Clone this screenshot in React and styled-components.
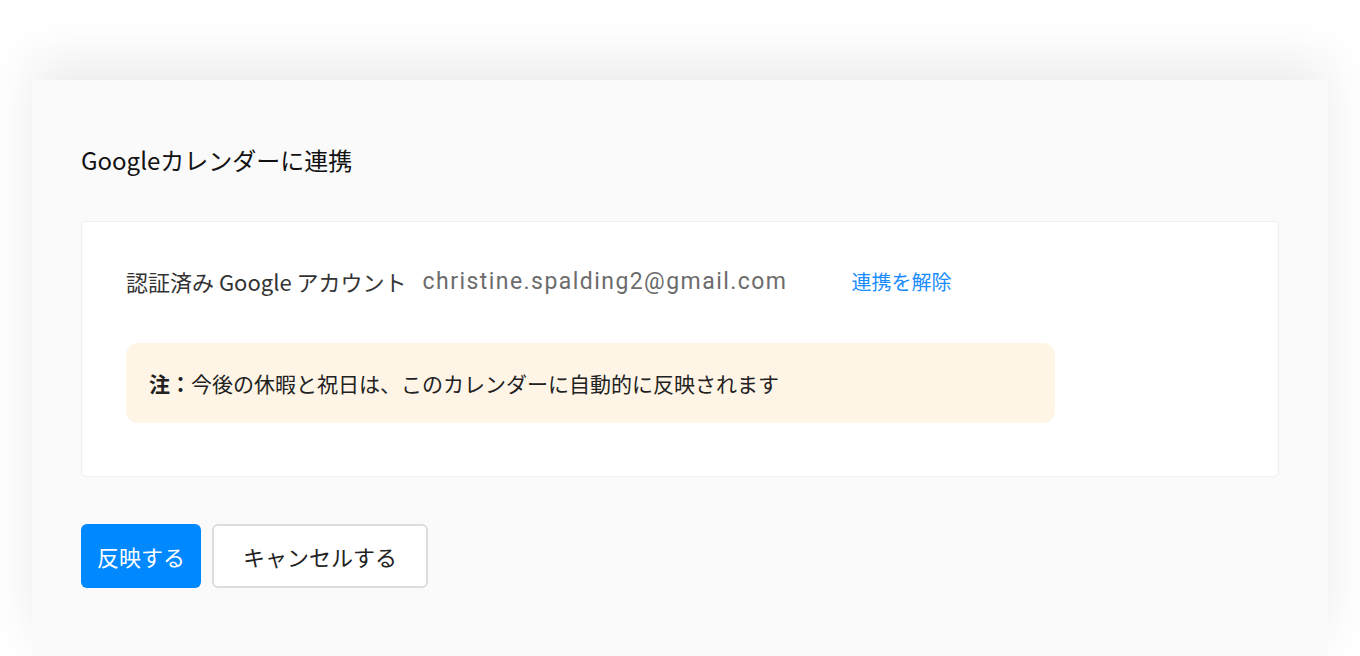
import styled, { createGlobalStyle } from "styled-components";

const GlobalStyle = createGlobalStyle`
  html, body {
    margin: 0;
    padding: 0;
    background: #ffffff;
    font-family: "Noto Sans CJK JP", "Noto Sans", sans-serif;
  }
  #root {
    height: 656px;
    overflow: hidden;
  }
`;

const Page = styled.div`
  padding: 80px 32px 0;
  height: 656px;
  box-sizing: border-box;
`;

const Panel = styled.section`
  background: #fafafa;
  height: 100%;
  box-sizing: border-box;
  padding: 64px 49px 0;
  box-shadow: 0 -20px 50px rgba(0, 0, 0, 0.08);
`;

const Title = styled.h2`
  margin: 0 0 45px;
  font-size: 24px;
  line-height: 32px;
  font-weight: 400;
  color: #111;
`;

const Card = styled.div`
  background: #fff;
  border: 1px solid #f0f0f0;
  border-radius: 5px;
  padding: 44px 44px 53px;
`;

const AccountRow = styled.div`
  display: flex;
  align-items: center;
  height: 30px;
`;

const Label = styled.span`
  font-size: 22px;
  color: #333;
  margin-right: 16px;
`;

const Email = styled.span`
  font-family: Roboto, "Liberation Sans", sans-serif;
  font-size: 23px;
  letter-spacing: 1.45px;
  color: #6c6c6c;
  margin-right: 64px;
`;

const UnlinkLink = styled.a`
  font-size: 20px;
  color: #1a8cff;
  text-decoration: none;
  cursor: pointer;
`;

const Note = styled.div`
  margin-top: 47px;
  width: 929px;
  height: 80px;
  box-sizing: border-box;
  background: #fff5e6;
  border-radius: 12px;
  padding: 0 23px;
  display: flex;
  align-items: center;
  font-size: 21px;
  color: #222;
  b {
    font-weight: 700;
  }
`;

const Actions = styled.div`
  display: flex;
  gap: 11px;
  margin-top: 47px;
`;

const Button = styled.button`
  height: 64px;
  width: ${(p) => p.$width}px;
  border-radius: 6px;
  font-family: "Noto Sans CJK JP", sans-serif;
  font-size: 22px;
  cursor: pointer;
  box-sizing: border-box;
  background: ${(p) => (p.$primary ? "#0088ff" : "#ffffff")};
  color: ${(p) => (p.$primary ? "#ffffff" : "#222")};
  border: ${(p) => (p.$primary ? "none" : "2px solid #dddddd")};
`;

export default function App() {
  return (
    <>
      <GlobalStyle />
      <Page>
        <Panel>
          <Title>Googleカレンダーに連携</Title>
          <Card>
            <AccountRow>
              <Label>認証済み Google アカウント</Label>
              <Email>christine.spalding2@gmail.com</Email>
              <UnlinkLink>連携を解除</UnlinkLink>
            </AccountRow>
            <Note>
              <b>注：</b>今後の休暇と祝日は、このカレンダーに自動的に反映されます
            </Note>
          </Card>
          <Actions>
            <Button $primary $width={120}>反映する</Button>
            <Button $width={216}>キャンセルする</Button>
          </Actions>
        </Panel>
      </Page>
    </>
  );
}
